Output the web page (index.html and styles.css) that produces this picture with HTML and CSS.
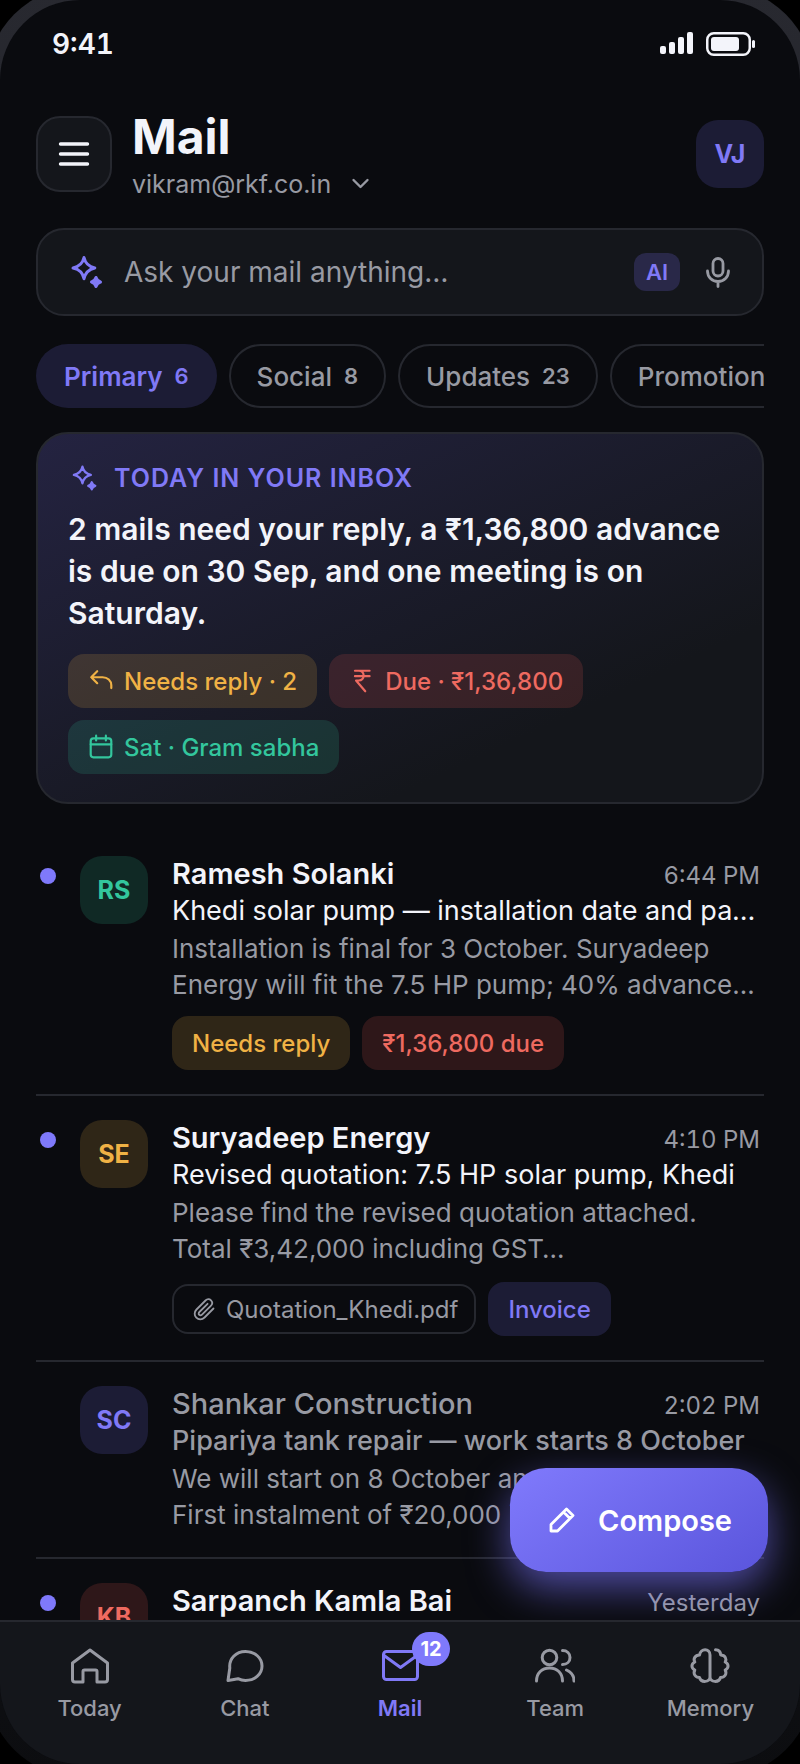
FILE: index.html
```html
<!DOCTYPE html>
<html lang="en">
<head>
    <meta charset="UTF-8">
    <meta name="viewport" content="width=device-width, initial-scale=1.0">
    <title>Mail</title>
    <link rel="stylesheet" href="styles.css">
</head>
<body>

    <svg class="defs" width="0" height="0" aria-hidden="true">
        <symbol id="sparkle" viewBox="0 0 36 36">
            <path d="M16 3.500c1.300 6 4.200 9 10.800 10.500-6.600 1.500-9.500 4.500-10.800 10.800C14.700 18.500 11.800 15.500 5 14 11.800 12.500 14.700 9.500 16 3.500z"/>
            <path d="M28 23.500c.8 2.800 1.700 3.700 4.500 4.500-2.800.8-3.700 1.700-4.500 4.500-.8-2.800-1.700-3.700-4.500-4.500 2.800-.8 3.700-1.700 4.500-4.500z" fill="currentColor"/>
        </symbol>
    </svg>

    <div class="bezel">
        <div class="phone">

            <div class="status">
                <span class="clock">9:41</span>
                <div class="status-icons">
                    <svg width="33" height="24" viewBox="0 0 33 24" fill="currentColor">
                        <rect x="0" y="14" width="6" height="8" rx="2"/>
                        <rect x="9" y="10" width="6" height="12" rx="2"/>
                        <rect x="18" y="5" width="6" height="17" rx="2"/>
                        <rect x="27" y="0" width="6" height="22" rx="2"/>
                    </svg>
                    <svg width="50" height="24" viewBox="0 0 50 24" fill="currentColor">
                        <rect x="1.250" y="1.250" width="42.500" height="21.500" rx="6.500" fill="none" stroke="currentColor" stroke-width="2.500"/>
                        <rect x="5" y="5" width="28" height="14" rx="3"/>
                        <rect x="46" y="8" width="3" height="8" rx="1.500"/>
                    </svg>
                </div>
            </div>

            <main class="content">
                <header class="header">
                    <button class="menu" aria-label="Menu">
                        <svg class="icon" width="36" height="36" viewBox="0 0 36 36" stroke-width="3.400"><path d="M4.500 8h27M4.500 18h27M4.500 28h27"/></svg>
                    </button>
                    <div class="heading">
                        <h1>Mail</h1>
                        <button class="account">vikram@rkf.co.in
                            <svg class="icon" width="20" height="20" viewBox="0 0 20 20" stroke-width="2.400"><path d="M2.500 6L9.500 13l7-7"/></svg>
                        </button>
                    </div>
                    <div class="avatar violet">VJ</div>
                </header>

                <div class="search">
                    <svg class="icon accent" width="36" height="36" stroke-width="3"><use href="#sparkle"/></svg>
                    <input type="text" placeholder="Ask your mail anything…" aria-label="Ask your mail anything">
                    <span class="ai">AI</span>
                    <button class="mic" aria-label="Voice">
                        <svg class="icon" width="36" height="36" viewBox="0 0 36 36" stroke-width="2.800"><rect x="13" y="4.500" width="10" height="17.500" rx="5"/><path d="M7.500 17c0 6 4.500 10.500 10.500 10.500S28.500 23 28.500 17M18 27.500v5"/></svg>
                    </button>
                </div>

                <nav class="tabs">
                    <button class="tab active">Primary <span>6</span></button>
                    <button class="tab">Social <span>8</span></button>
                    <button class="tab">Updates <span>23</span></button>
                    <button class="tab">Promotions <span>41</span></button>
                </nav>

                <section class="summary">
                    <h2>
                        <svg class="icon" width="28" height="28" stroke-width="3"><use href="#sparkle"/></svg>
                        Today in your inbox
                    </h2>
                    <p>2 mails need your reply, a ₹1,36,800 advance is due on 30 Sep, and one meeting is on Saturday.</p>
                    <div class="chips">
                        <button class="chip amber">
                            <svg class="icon" width="26" height="26" viewBox="0 0 24 24" stroke-width="2"><path d="M8.500 3L3 8.500 8.500 14M3 8.500h10.500c4.500 0 8 3 8 7.500v2.500"/></svg>
                            Needs reply · 2
                        </button>
                        <button class="chip red">
                            <svg class="icon" width="26" height="26" viewBox="0 0 24 24" stroke-width="2"><path d="M5.500 2.500h13.500M5.500 7.500h13.500M5.500 2.500h3.500c6 0 6 9 0 9H6.500l8.500 10"/></svg>
                            Due · ₹1,36,800
                        </button>
                        <button class="chip green">
                            <svg class="icon" width="26" height="26" viewBox="0 0 24 24" stroke-width="2"><rect x="2.500" y="4" width="19" height="17.500" rx="2.500"/><path d="M2.500 9.500h19M7.500 1.500V6M16.500 1.500V6"/></svg>
                            Sat · Gram sabha
                        </button>
                    </div>
                </section>

                <div class="list">
                    <article class="mail unread">
                        <span class="dot"></span>
                        <div class="avatar green">RS</div>
                        <div class="body">
                            <div class="top"><h3>Ramesh Solanki</h3><time>6:44 PM</time></div>
                            <p class="subject">Khedi solar pump — installation date and payment</p>
                            <p class="preview">Installation is final for 3 October. Suryadeep Energy will fit the 7.5 HP pump; 40% advance…</p>
                            <div class="tags">
                                <span class="chip amber">Needs reply</span>
                                <span class="chip red">₹1,36,800 due</span>
                            </div>
                        </div>
                    </article>

                    <article class="mail unread">
                        <span class="dot"></span>
                        <div class="avatar amber">SE</div>
                        <div class="body">
                            <div class="top"><h3>Suryadeep Energy</h3><time>4:10 PM</time></div>
                            <p class="subject">Revised quotation: 7.5 HP solar pump, Khedi</p>
                            <p class="preview">Please find the revised quotation attached. Total ₹3,42,000 including GST…</p>
                            <div class="tags">
                                <a class="file" href="#">
                                    <svg class="icon" width="24" height="24" viewBox="0 0 24 24" stroke-width="1.800"><path d="M21.500 11.500l-9 9c-2.400 2.400-6 2.400-8.200.2s-2.200-5.800.2-8.200l9-9c1.700-1.700 4-1.700 5.500-.2s1.500 3.800-.2 5.500l-8.800 8.800c-.9.900-2 .9-2.800.2s-.7-1.900.2-2.800l8.200-8.200"/></svg>
                                    Quotation_Khedi.pdf
                                </a>
                                <span class="chip violet">Invoice</span>
                            </div>
                        </div>
                    </article>

                    <article class="mail">
                        <span class="dot"></span>
                        <div class="avatar violet">SC</div>
                        <div class="body">
                            <div class="top"><h3>Shankar Construction</h3><time>2:02 PM</time></div>
                            <p class="subject">Pipariya tank repair — work starts 8 October</p>
                            <p class="preview">We will start on 8 October and run 2 weeks. First instalment of ₹20,000 is needed.</p>
                        </div>
                    </article>

                    <article class="mail unread">
                        <span class="dot"></span>
                        <div class="avatar red">KB</div>
                        <div class="body">
                            <div class="top"><h3>Sarpanch Kamla Bai</h3><time>Yesterday</time></div>
                        </div>
                    </article>
                </div>
            </main>

            <div class="bottom">
                <button class="compose">
                    <svg class="icon" width="28" height="28" viewBox="0 0 28 28" stroke-width="2.800"><path d="M3 25v-6.500L18.500 3 25 9.500 9.500 25zM15.500 6l6.500 6.500"/></svg>
                    Compose
                </button>
                <nav class="nav">
                    <a href="#">
                        <svg class="icon" width="40" height="40" viewBox="0 0 40 40"><path d="M20 4L2.500 17v16.500A2.500 2.500 0 0 0 5 36H13V25.500a1.500 1.500 0 0 1 1.500-1.500h11a1.500 1.500 0 0 1 1.500 1.500V36h8a2.500 2.500 0 0 0 2.500-2.500V17z"/></svg>
                        Today
                    </a>
                    <a href="#">
                        <svg class="icon" width="40" height="40" viewBox="0 0 40 40"><path d="M3 34.500L4.800 22C3.800 12.500 11 5.500 20.500 5.500c9.500 0 16.500 6.500 16.500 14.500 0 8.500-7.500 14.500-16.500 14.500-3 0-5.500-.8-7.500-1.800-3 .6-6 1.200-10 1.800z"/></svg>
                        Chat
                    </a>
                    <a href="#" class="active">
                        <svg class="icon" width="40" height="40" viewBox="0 0 40 40"><rect x="3.500" y="5.500" width="34" height="28" rx="3"/><path d="M4 9.500l16.500 12L37 9.500"/></svg>
                        <span class="badge">12</span>
                        Mail
                    </a>
                    <a href="#">
                        <svg class="icon" width="40" height="40" viewBox="0 0 40 40"><circle cx="14.500" cy="11.500" r="7.300"/><path d="M1.500 35c0-8 5.500-13 13-13s13 5 13 13M27.500 4.500c4.500 0 7.500 3 7.500 7s-3 7-7.500 7M31.500 24c4.500 2 7.500 6 7.500 11"/></svg>
                        Team
                    </a>
                    <a href="#">
                        <svg class="icon" width="40" height="40" viewBox="0 0 40 40"><path d="M20 31V9c0-7-9.500-7-10.500 0-4.500 0-6.500 4-4.700 7-3.800 2-3.800 6 0 8-2 4 .7 7.500 4.700 7.500 1.500 5.500 10.500 5 10.500-.5zM25.500 3.800c3 0 5 2 5.200 5.200 4.500 0 6.300 4 4.500 7 3.800 2 3.800 6 0 8 2 4-.5 7.500-4.700 7.500-1.500 5.500-10.500 5-10.500-.5"/></svg>
                        Memory
                    </a>
                </nav>
            </div>

        </div>
    </div>

</body>
</html>
```
FILE: styles.css
```css
:root {
    --bg: #0a0b0f;
    --surface: #14161b;
    --line: #26282f;
    --text: #f3f4fa;
    --muted: #989aa3;
    --accent: #8079f6;
    --amber: #f0b245;
    --red: #ee6a60;
    --green: #33c69d;
}

* {
    box-sizing: border-box;
    margin: 0;
    padding: 0;
}

body {
    height: 100vh;
    overflow: hidden;
    background: #000;
    color: var(--text);
    font-family: Inter, "Liberation Sans", sans-serif;
    font-size: 26px;
}

button,
input {
    font: inherit;
    color: inherit;
    background: none;
    border: none;
}

a {
    color: inherit;
    text-decoration: none;
}

.defs {
    display: block;
}

.icon {
    flex: none;
    fill: none;
    stroke: currentColor;
    stroke-linecap: round;
    stroke-linejoin: round;
}

.accent {
    color: var(--accent);
}

/* Phone shell */
.bezel {
    margin: -13px;
    padding: 13px;
    border-radius: 93px;
    background: linear-gradient(#282930, #0c0d10);
}

.phone {
    display: flex;
    flex-direction: column;
    height: 100vh;
    border-radius: 80px;
    overflow: hidden;
    background: var(--bg);
}

.status {
    display: flex;
    flex: none;
    align-items: center;
    justify-content: space-between;
    height: 88px;
    padding: 0 44px 0 52px;
}

.clock {
    font-size: 28px;
    font-weight: 600;
    font-variant-numeric: tabular-nums;
}

.status-icons {
    display: flex;
    gap: 13px;
}

.content {
    flex: 1;
    min-height: 0;
    overflow: hidden;
    padding: 18px 36px 0;
}

/* Header */
.header {
    display: flex;
    align-items: center;
    gap: 20px;
}

.menu {
    display: flex;
    align-items: center;
    justify-content: center;
    width: 76px;
    height: 76px;
    border: 2px solid var(--line);
    border-radius: 24px;
    background: var(--surface);
}

.heading {
    flex: 1;
    padding-top: 2px;
}

.heading h1 {
    font-size: 48px;
    line-height: 58px;
}

.account {
    display: flex;
    align-items: center;
    gap: 20px;
    color: var(--muted);
    font-size: 25px;
    line-height: 36px;
}

.avatar {
    display: flex;
    flex: none;
    align-items: center;
    justify-content: center;
    width: 68px;
    height: 68px;
    border-radius: 22px;
    font-size: 25px;
    font-weight: 700;
    line-height: 28px;
}

.violet {
    color: var(--accent);
    background: rgba(124, 116, 255, 0.16);
}

.green {
    color: var(--green);
    background: rgba(51, 198, 157, 0.16);
}

.amber {
    color: var(--amber);
    background: rgba(240, 178, 69, 0.16);
}

.red {
    color: var(--red);
    background: rgba(238, 90, 80, 0.16);
}

/* Search */
.search {
    display: flex;
    align-items: center;
    gap: 20px;
    height: 88px;
    margin-top: 26px;
    padding: 0 26px 0 30px;
    border: 2px solid var(--line);
    border-radius: 28px;
    background: var(--surface);
}

.search input {
    flex: 1;
    min-width: 0;
    font-size: 28px;
    outline: none;
}

.search input::placeholder {
    color: var(--muted);
    opacity: 1;
}

.ai {
    padding: 0 12px;
    border-radius: 12px;
    background: rgba(124, 116, 255, 0.2);
    color: var(--accent);
    font-size: 22px;
    font-weight: 600;
    line-height: 38px;
}

.mic {
    display: flex;
    color: var(--muted);
}

/* Tabs */
.tabs {
    display: flex;
    gap: 12px;
    margin: 28px 0 24px;
    overflow: hidden;
}

.tab {
    display: flex;
    flex: none;
    align-items: center;
    gap: 12px;
    height: 64px;
    padding: 0 26px;
    border: 2px solid var(--line);
    border-radius: 32px;
    color: var(--muted);
    font-weight: 500;
}

.tab span {
    font-size: 22px;
    font-weight: 600;
}

.tab.active {
    border-color: transparent;
    background: rgba(124, 116, 255, 0.16);
    color: var(--accent);
    font-weight: 600;
}

/* Summary card */
.summary {
    padding: 26px 30px 28px;
    border: 2px solid var(--line);
    border-radius: 32px;
    background: linear-gradient(155deg, #242341, #14161b 75%);
}

.summary h2 {
    display: flex;
    align-items: center;
    gap: 16px;
    padding-left: 2px;
    color: var(--accent);
    font-size: 25px;
    font-weight: 600;
    line-height: 36px;
    letter-spacing: 1px;
    text-transform: uppercase;
}

.summary p {
    margin-top: 12px;
    font-size: 30px;
    font-weight: 600;
    line-height: 42px;
}

.chips {
    display: flex;
    flex-wrap: wrap;
    gap: 12px;
    margin-top: 20px;
}

.chip {
    display: flex;
    align-items: center;
    gap: 10px;
    height: 54px;
    padding: 0 20px;
    border-radius: 16px;
    font-size: 24px;
    font-weight: 500;
}

/* Mail list */
.list {
    margin-top: 28px;
}

.mail {
    display: flex;
    padding: 24px 4px;
    border-bottom: 2px solid var(--line);
    color: var(--muted);
}

.dot {
    flex: none;
    width: 16px;
    height: 16px;
    margin: 12px 24px 0 0;
    border-radius: 50%;
}

.unread .dot {
    background: #7f79fb;
}

.body {
    flex: 1;
    min-width: 0;
    margin-left: 24px;
}

.top {
    display: flex;
    align-items: baseline;
    justify-content: space-between;
    height: 37px;
    line-height: 36px;
}

.top h3 {
    font-size: 29px;
    font-weight: 500;
}

.top time {
    font-size: 24px;
    font-variant-numeric: tabular-nums;
}

.subject {
    overflow: hidden;
    font-size: 27px;
    font-weight: 500;
    line-height: 36px;
    text-overflow: ellipsis;
    white-space: nowrap;
}

.unread h3 {
    color: var(--text);
    font-weight: 600;
}

.unread .subject {
    color: var(--text);
    font-weight: 400;
}

.preview {
    margin-top: 2px;
    line-height: 36px;
}

.tags {
    display: flex;
    align-items: flex-end;
    gap: 12px;
    margin-top: 13px;
}

.file {
    display: flex;
    align-items: center;
    gap: 10px;
    height: 50px;
    margin: 4px 0 2px;
    padding: 0 16px 0 18px;
    border: 2px solid var(--line);
    border-radius: 16px;
    font-size: 24px;
}

/* Bottom bar */
.bottom {
    position: relative;
    flex: none;
}

.compose {
    position: absolute;
    right: 32px;
    bottom: calc(100% + 48px);
    display: flex;
    align-items: center;
    gap: 22px;
    height: 104px;
    padding: 0 36px 0 38px;
    border-radius: 36px;
    background: linear-gradient(145deg, #807afc, #5a55dc);
    box-shadow: 0 16px 40px rgba(124, 116, 255, 0.6);
    color: #fff;
    font-size: 29px;
    font-weight: 600;
}

.nav {
    position: relative;
    display: flex;
    padding: 24px 12px 42px;
    border-top: 2px solid var(--line);
    background: var(--surface);
}

.nav a {
    position: relative;
    display: flex;
    flex: 1;
    flex-direction: column;
    align-items: center;
    gap: 8px;
    color: var(--muted);
    font-size: 22px;
    font-weight: 500;
    line-height: 28px;
}

.nav .icon {
    stroke-width: 3;
}

.nav .active {
    color: var(--accent);
    font-weight: 600;
}

.badge {
    position: absolute;
    top: -14px;
    left: calc(50% + 12px);
    min-width: 38px;
    padding: 0 8px;
    border-radius: 17px;
    background: #7f79fb;
    color: #fff;
    font-size: 20px;
    font-weight: 700;
    line-height: 34px;
    text-align: center;
}
```
